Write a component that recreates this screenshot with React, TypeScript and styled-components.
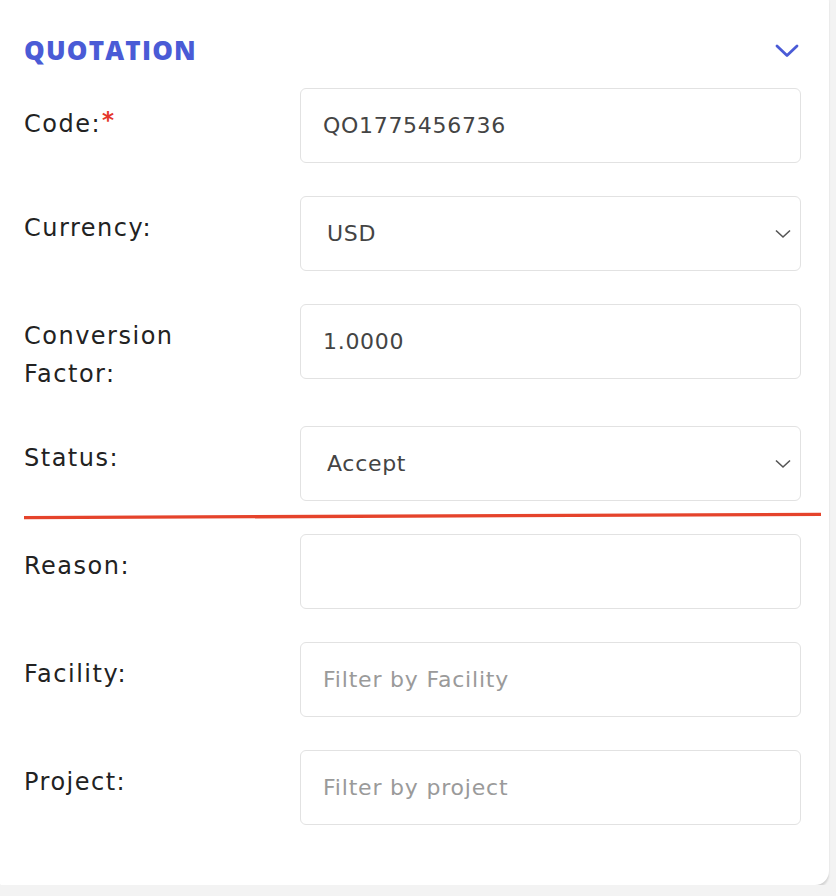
import React from 'react'
import styled, { createGlobalStyle } from 'styled-components'

const GlobalStyle = createGlobalStyle`
  html, body {
    margin: 0;
    padding: 0;
    background: #f3f3f3;
    overflow: hidden;
  }
  body {
    font-family: "DejaVu Sans", "Open Sans", sans-serif;
  }
`

type Field = {
  label: string
  required?: boolean
  value?: string
  placeholder?: string
  select?: boolean
}

const fields: Field[] = [
  { label: 'Code:', required: true, value: 'QO1775456736' },
  { label: 'Currency:', value: 'USD', select: true },
  { label: 'Conversion Factor:', value: '1.0000' },
  { label: 'Status:', value: 'Accept', select: true },
  { label: 'Reason:', value: '' },
  { label: 'Facility:', placeholder: 'Filter by Facility' },
  { label: 'Project:', placeholder: 'Filter by project' },
]

const SmallChevron = () => (
  <svg width="16" height="10" viewBox="0 0 16 10" fill="none">
    <path d="M1 1.5 L8 8 L15 1.5" stroke="#555" strokeWidth="1.6" />
  </svg>
)

const HeaderChevron = () => (
  <svg width="24" height="14" viewBox="0 0 24 14" fill="none">
    <path d="M2 2 L12 11.5 L22 2" stroke="#4a5bd6" strokeWidth="2.8" strokeLinecap="round" strokeLinejoin="round" />
  </svg>
)

const App = () => {
  return (
    <>
      <GlobalStyle />
      <Card>
        <Header>
          <Title>QUOTATION</Title>
          <ToggleButton>
            <HeaderChevron />
          </ToggleButton>
        </Header>
        <Form>
          {fields.map((f) => (
            <Row key={f.label}>
              <Label>
                {f.label}
                {f.required && <Required>*</Required>}
              </Label>
              <InputBox $select={f.select}>
                {f.placeholder ? (
                  <Placeholder>{f.placeholder}</Placeholder>
                ) : (
                  <Value>{f.value}</Value>
                )}
                {f.select && <SmallChevron />}
              </InputBox>
            </Row>
          ))}
          <Annotation width="797" height="8" viewBox="0 0 797 8">
            <line x1="0" y1="5.6" x2="797" y2="2.4" stroke="#e5432b" strokeWidth="3.4" />
          </Annotation>
        </Form>
      </Card>
    </>
  )
}

const Card = styled.div`
  position: relative;
  width: 840px;
  margin: -12px 0 0 -11px;
  padding: 42px 35px 60px 35px;
  box-sizing: border-box;
  background: #ffffff;
  border-radius: 14px;
  box-shadow: 0 3px 2px rgba(0, 0, 0, 0.13);
`

const Header = styled.div`
  display: flex;
  align-items: center;
  justify-content: space-between;
  height: 40px;
  margin-bottom: 18px;
`

const Title = styled.h2`
  margin: 0;
  font-family: "Open Sans", sans-serif;
  font-weight: 800;
  font-size: 26px;
  letter-spacing: 1.2px;
  color: #4a5bd6;
`

const ToggleButton = styled.div`
  display: flex;
  align-items: center;
  margin-right: -5px;
  padding-top: 2px;
`

const Form = styled.div`
  position: relative;
  display: flex;
  flex-direction: column;
  gap: 33px;
`

const Row = styled.div`
  display: grid;
  grid-template-columns: 276px 501px;
  align-items: start;
`

const Label = styled.div`
  padding-top: 13px;
  width: 230px;
  font-size: 24px;
  line-height: 38px;
  letter-spacing: 1.5px;
  color: #222;
`

const Required = styled.span`
  color: #e5372b;
  font-size: 23px;
  font-weight: 700;
  vertical-align: 4px;
  margin-left: 1px;
`

const InputBox = styled.div<{ $select?: boolean }>`
  height: 75px;
  box-sizing: border-box;
  display: flex;
  align-items: center;
  justify-content: space-between;
  padding: 0 9px 0 ${(p) => (p.$select ? '26px' : '22px')};
  border: 1px solid #e2e2e2;
  border-radius: 6px;
  background: #fff;
`

const Value = styled.span`
  font-size: 22px;
  color: #444;
  letter-spacing: 0.7px;
`

const Placeholder = styled.span`
  font-size: 22px;
  color: #9a9a9a;
  letter-spacing: 0.8px;
`

const Annotation = styled.svg`
  position: absolute;
  left: 0;
  top: 424px;
  pointer-events: none;
`

export default App
